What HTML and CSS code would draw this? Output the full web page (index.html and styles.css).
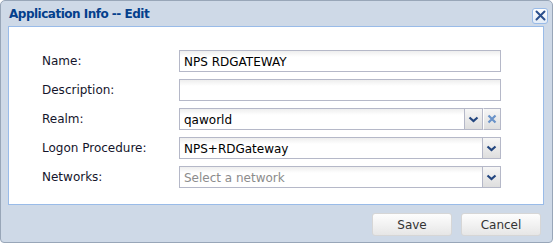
FILE: index.html
```html
<!DOCTYPE html>
<html lang="en">
<head>
    <meta charset="UTF-8">
    <title>Application Info -- Edit</title>
    <link rel="stylesheet" href="styles.css">
</head>
<body>
    <div class="window">
        <div class="win-header">
            <span class="win-title">Application Info -- Edit</span>
            <span class="win-close">
                <svg width="11" height="11" viewBox="0 0 11 11"><path d="M1.5 1.5 L9.5 9.5 M9.5 1.5 L1.5 9.5" stroke="#2b4f8c" stroke-width="2" stroke-linecap="round"/></svg>
            </span>
        </div>
        <div class="win-body">
            <form class="form">
                <label>Name:</label>
                <div class="field"><input type="text" class="text" value="NPS RDGATEWAY"></div>

                <label>Description:</label>
                <div class="field"><input type="text" class="text" value=""></div>

                <label>Realm:</label>
                <div class="field combo">
                    <input type="text" class="text" value="qaworld">
                    <span class="trigger"><svg width="11" height="7" viewBox="0 0 11 7"><path d="M1.5 1.5 L5.5 5 L9.5 1.5" fill="none" stroke="#23467f" stroke-width="2.2"/></svg></span>
                    <span class="trigger clear"><svg width="10" height="10" viewBox="0 0 10 10"><path d="M1.5 1.5 L8.5 8.5 M8.5 1.5 L1.5 8.5" stroke="#6a93c9" stroke-width="2.2"/></svg></span>
                </div>

                <label>Logon Procedure:</label>
                <div class="field combo">
                    <input type="text" class="text" value="NPS+RDGateway">
                    <span class="trigger"><svg width="11" height="7" viewBox="0 0 11 7"><path d="M1.5 1.5 L5.5 5 L9.5 1.5" fill="none" stroke="#23467f" stroke-width="2.2"/></svg></span>
                </div>

                <label>Networks:</label>
                <div class="field combo">
                    <input type="text" class="text" placeholder="Select a network">
                    <span class="trigger"><svg width="11" height="7" viewBox="0 0 11 7"><path d="M1.5 1.5 L5.5 5 L9.5 1.5" fill="none" stroke="#23467f" stroke-width="2.2"/></svg></span>
                </div>
            </form>
        </div>
        <div class="win-footer">
            <button type="button" class="btn">Save</button>
            <button type="button" class="btn">Cancel</button>
        </div>
    </div>
</body>
</html>
```

FILE: styles.css
```css
body {
    margin: 0;
    font-family: 'DejaVu Sans', Verdana, sans-serif;
    font-size: 12px;
    background-color: #ffffff;
}
.window {
    width: 553px;
    height: 243px;
    box-sizing: border-box;
    border: 1px solid #98a6b8;
    border-radius: 5px 5px 4px 4px;
    background-color: #ced9e7;
    padding: 0 8px 0 7px;
    display: flex;
    flex-direction: column;
}
.win-header {
    height: 25px;
    display: flex;
    align-items: center;
    justify-content: space-between;
    padding: 0 0 0 1px;
}
.win-title {
    color: #04408c;
    font-weight: bold;
    font-size: 12px;
    letter-spacing: -0.5px;
    margin-top: 1px;
}
.win-close {
    width: 16px;
    height: 16px;
    box-sizing: border-box;
    border: 1px solid #99bbe8;
    border-radius: 3px;
    background: linear-gradient(#ffffff, #e3ecf7);
    display: flex;
    align-items: center;
    justify-content: center;
    margin-right: -4px;
    margin-top: 4px;
}
.win-body {
    height: 179px;
    box-sizing: border-box;
    background-color: #ffffff;
    border: 1px solid #99bbe8;
    padding: 23px 0 0 33px;
}
.form {
    display: grid;
    grid-template-columns: 137px 322px;
    row-gap: 7px;
    align-items: center;
}
label {
    color: #15152b;
    height: 22px;
    line-height: 22px;
}
.field {
    display: flex;
    height: 22px;
}
.text {
    flex: 1;
    min-width: 0;
    height: 22px;
    box-sizing: border-box;
    border: 1px solid #b5b8c8;
    background: linear-gradient(#eeeeee, #ffffff 6px);
    padding: 1px 4px 0;
    font-family: inherit;
    font-size: 12px;
    color: #000000;
    outline: none;
}
.text::placeholder {
    color: #8c8c8c;
}
.trigger {
    width: 18px;
    height: 22px;
    box-sizing: border-box;
    border: 1px solid #b5b8c8;
    border-left: none;
    background: linear-gradient(#f6f6f6, #dedede);
    display: flex;
    align-items: center;
    justify-content: center;
}
.trigger.clear {
    border-left: 1px solid #ffffff;
}
.win-footer {
    display: flex;
    justify-content: flex-end;
    gap: 9px;
    padding: 8px 3px 0 0;
}
.btn {
    width: 80px;
    height: 23px;
    border: 1px solid #d6d6d6;
    border-radius: 3px;
    background: linear-gradient(#fdfdfd, #f2f2f2 50%, #e6e6e6);
    color: #333333;
    font-family: inherit;
    font-size: 12px;
    padding: 0;
}
```
